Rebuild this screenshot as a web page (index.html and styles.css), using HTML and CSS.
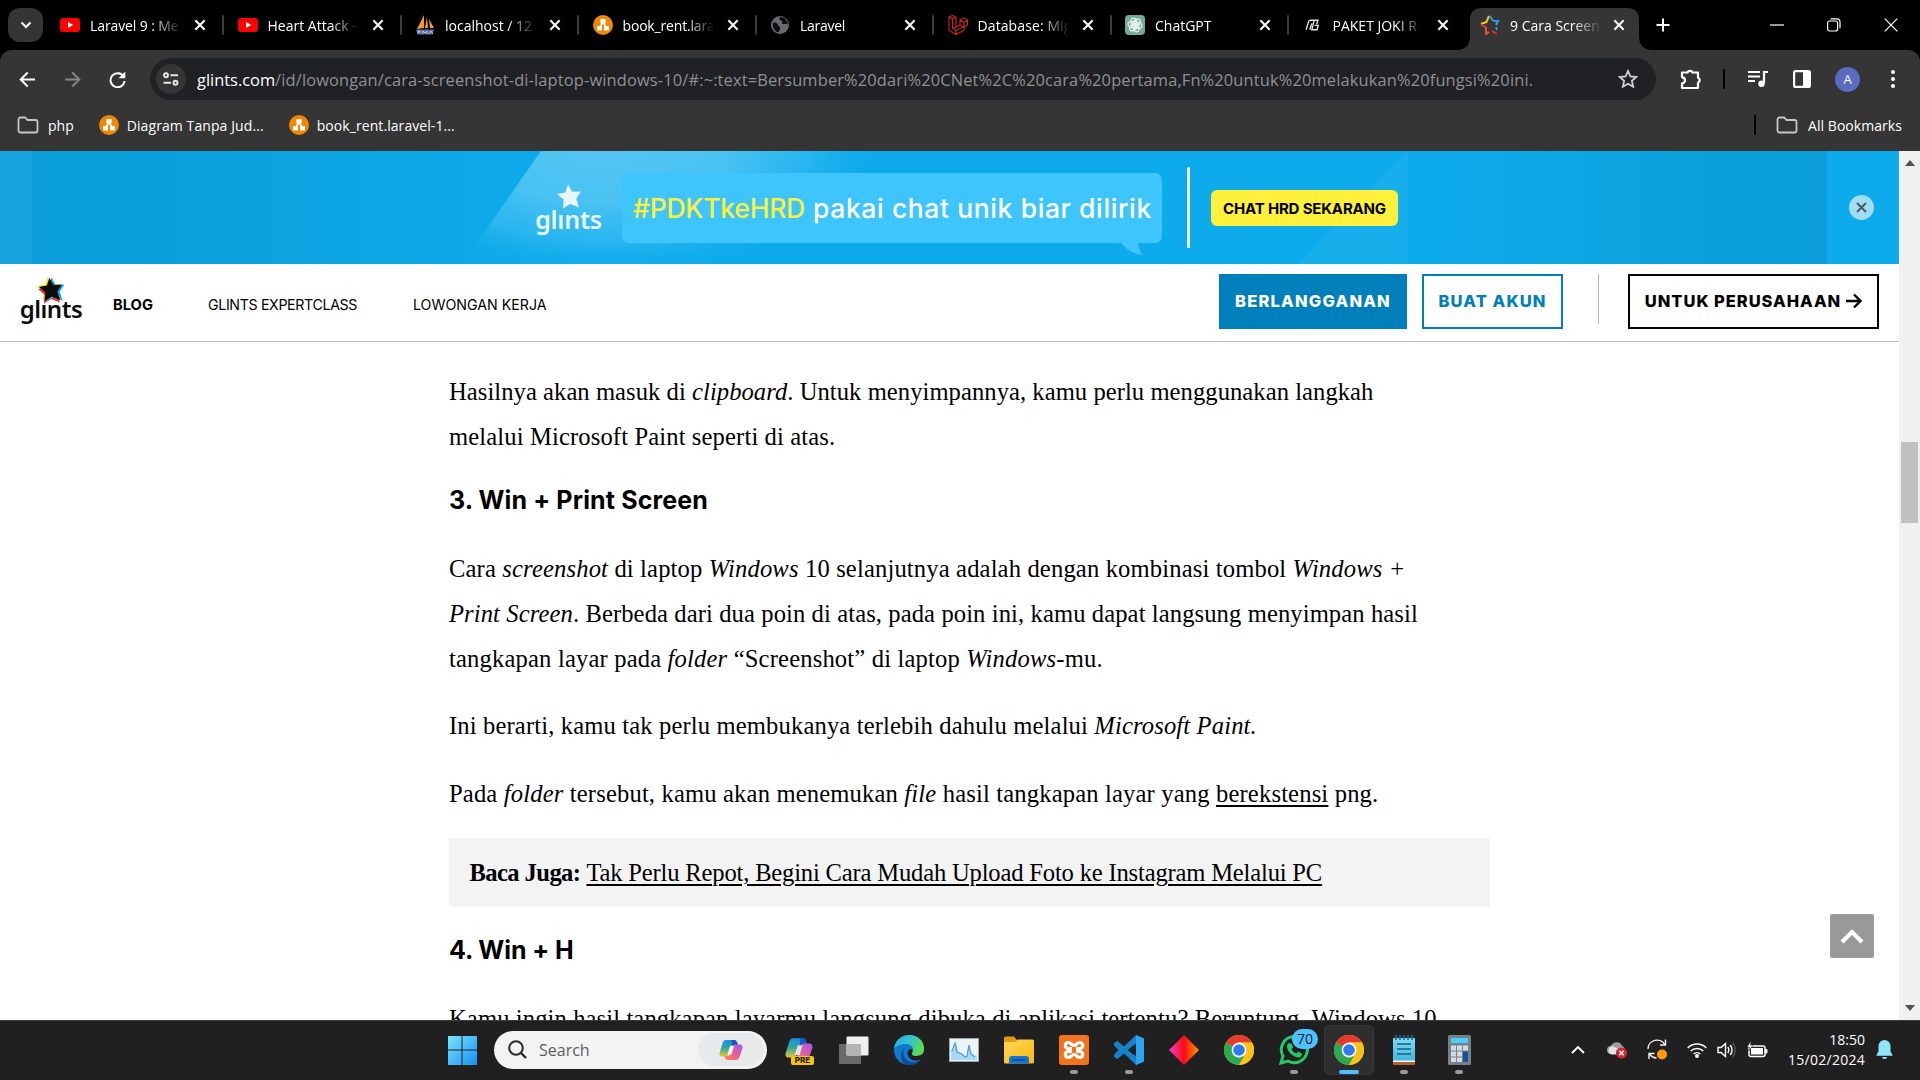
FILE: index.html
```html
<!DOCTYPE html>
<html lang="id">
<head>
<meta charset="utf-8">
<title>9 Cara Screenshot di Laptop Windows 10</title>
<link rel="stylesheet" href="styles.css">
</head>
<body>
<svg class="defs" width="0" height="0" aria-hidden="true">
  <defs>
    <linearGradient id="winblue" x1="0" y1="0" x2="1" y2="1"><stop offset="0" stop-color="#7be3fb"/><stop offset="1" stop-color="#1591f5"/></linearGradient>
    <linearGradient id="cpA" x1="0" y1="0" x2="0" y2="1"><stop offset="0" stop-color="#1a8fe8"/><stop offset=".45" stop-color="#2aa7a5"/><stop offset="1" stop-color="#e8c92c"/></linearGradient>
    <linearGradient id="cpB" x1="1" y1="0" x2="0" y2="1"><stop offset="0" stop-color="#9a5cf0"/><stop offset=".5" stop-color="#ea5c9c"/><stop offset="1" stop-color="#fb8a3c"/></linearGradient>
    <linearGradient id="edgeG" x1="0" y1="0" x2="1" y2=".4"><stop offset="0" stop-color="#2fa8e6"/><stop offset=".6" stop-color="#34c6c8"/><stop offset="1" stop-color="#5fdc4c"/></linearGradient>
    <linearGradient id="folderG" x1="0" y1="0" x2="1" y2="1"><stop offset="0" stop-color="#ffd65c"/><stop offset="1" stop-color="#f9b90c"/></linearGradient>
    <linearGradient id="diaG"><stop offset="0" stop-color="#f43fd0"/><stop offset=".5" stop-color="#fb0a12"/><stop offset="1" stop-color="#ff9a00"/></linearGradient>
    <linearGradient id="noteG" x1="0" y1="0" x2="0" y2="1"><stop offset="0" stop-color="#7fdcf2"/><stop offset="1" stop-color="#3fb4dc"/></linearGradient>
    <symbol id="x" viewBox="0 0 12 12"><path d="M2 2l8 8M10 2l-8 8" stroke="#f2f2f2" stroke-width="1.9" fill="none"/></symbol>
    <symbol id="yt" viewBox="0 0 20 14"><rect width="20" height="14" rx="3.2" fill="#f00"/><path d="M8 4l5.2 3L8 10z" fill="#fff"/></symbol>
    <symbol id="drawio" viewBox="0 0 20 20"><circle cx="10" cy="10" r="10" fill="#f08705"/><path d="M10 7L6.5 13M10 7l3.500 6" stroke="#fff" stroke-width="1.600"/><rect x="7.400" y="4" width="5.200" height="4.600" rx=".8" fill="#fff"/><rect x="4" y="11" width="5" height="4.600" rx=".8" fill="#fff"/><rect x="11" y="11" width="5" height="4.600" rx=".8" fill="#fff"/></symbol>
    <symbol id="folder" viewBox="0 0 22 18"><path d="M1.500 3.500a2 2 0 0 1 2-2h4.700l2.300 2.500h8a2 2 0 0 1 2 2v8.500a2 2 0 0 1-2 2h-15a2 2 0 0 1-2-2z" fill="none" stroke="#c7c7c7" stroke-width="1.800"/></symbol>
    <symbol id="chrome" viewBox="0 0 30 30"><circle cx="15" cy="15" r="15" fill="#fbc116"/><path d="M15 15L2 7.500A15 15 0 0 1 28 7.500H15z" fill="#e33b2e"/><path d="M2 7.500A15 15 0 0 0 15 30l6.500-11.300L15 15z" fill="#2da94f"/><path d="M15 15l6.500 3.700L15 30a15 15 0 0 0 13-22.500H15z" fill="#fbc116"/><circle cx="15" cy="15" r="7.400" fill="#fff"/><circle cx="15" cy="15" r="5.800" fill="#2f7bee"/></symbol>
    <symbol id="copilot" viewBox="0 0 24 22"><path d="M7 1h8c2 0 2.500 1 3 2.500L19 6h-4c-2 0-3 1-3.500 3L9.500 15c-.6 2-1.500 2.500-3 2.500H3C1 17.500 0 15.500.6 13.500L3.600 4C4.200 2 5 1 7 1z" fill="url(#cpA)"/><path d="M12.500 1H15c2 0 2.500 1 3 2.500L19 6h-4c-1 0-1.500.2-2 .5z" fill="#1755c8"/><path d="M17 21H9c-2 0-2.500-1-3-2.500L5.400 17H8c2 0 3-1 3.500-3l2-6c.6-2 1.500-2.500 3-2.500H21c2 0 3 2 2.400 4L20.400 18c-.6 2-1.400 3-3.400 3z" fill="url(#cpB)"/><path class="cpgap" d="M11 7h4l-2.500 8.500h-4z"/></symbol>
    <symbol id="star5" viewBox="0 0 24 24"><path d="M11 0l4.200 7.200L24 7l-4.800 7.200L22 23l-8.700-3.600L6 24l.6-9L0 9.400l8.300-1.500z"/></symbol>
  </defs>
</svg>

<header class="browser">
  <div class="tabs">
    <div class="tabsearch"><svg width="12" height="8" viewBox="0 0 12 8"><path d="M1.500 1.500L6 6l4.500-4.500" fill="none" stroke="#fff" stroke-width="2"/></svg></div>
    <div class="tab"><svg class="fav" viewBox="0 0 20 14"><use href="#yt"/></svg><span class="title"><span class="t tt1">Laravel 9 : Me</span></span><svg class="close"><use href="#x"/></svg></div>
    <div class="tab"><svg class="fav" viewBox="0 0 20 14"><use href="#yt"/></svg><span class="title"><span class="t">Heart Attack -</span></span><svg class="close"><use href="#x"/></svg></div>
    <div class="tab"><svg class="fav" viewBox="0 0 20 20"><path d="M9 0v13L2 14zM12 2l1 11h-3zM14 4l5 9h-4z" fill="#f39a2c"/><path d="M1 14.500h18l-1.500 5h-15z" fill="#5c6aa0"/><path d="M3 19v-3h2v2M8 19v-3l2 2 2-2v3M14 19l2-3 2 3" stroke="#d7dbe8" fill="none" stroke-width=".8"/></svg><span class="title"><span class="t">localhost / 12</span></span><svg class="close"><use href="#x"/></svg></div>
    <div class="tab"><svg class="fav" viewBox="0 0 20 20"><use href="#drawio"/></svg><span class="title"><span class="t tt4">book_rent.lara</span></span><svg class="close"><use href="#x"/></svg></div>
    <div class="tab"><svg class="fav" viewBox="0 0 20 20"><circle cx="10" cy="10" r="9" fill="#686c72"/><path d="M3 8c3-1 4 0 5 2s3 2 2 4-1 4-3 3-5-5-4-9zM10 2c-2 3 1 3 2 4s-1 3 1 3 4-1 5 1c0-4-3-8-8-8z" fill="#0b0b0b"/></svg><span class="title"><span class="t tt5">Laravel</span></span><svg class="close"><use href="#x"/></svg></div>
    <div class="tab"><svg class="fav" viewBox="0 0 20 20"><path d="M1 2l3.500-1.500L8 2v10l4-2V5l4-2 3.500 2v5L16 12v3.500L8 19.500 1 15.500zM1 2l3.500 2L8 2M4.500 4v9.500L8 15.500l8-4V7.500L12 5M16 7.500L19.500 5M8 15.500v4M12 10l4 2M8 12l-3.500 1.500" fill="none" stroke="#c8281e" stroke-width="1.100"/></svg><span class="title"><span class="t tt6">Database: Mig</span></span><svg class="close"><use href="#x"/></svg></div>
    <div class="tab"><svg class="fav" viewBox="0 0 20 20"><rect width="20" height="20" rx="4" fill="#74aa9c"/><g fill="none" stroke="#e8f3f0" stroke-width="1.200"><rect x="6" y="3.200" width="5" height="9" rx="2.500"/><rect x="6" y="3.200" width="5" height="9" rx="2.500" transform="rotate(60 10 10)"/><rect x="6" y="3.200" width="5" height="9" rx="2.500" transform="rotate(120 10 10)"/><rect x="6" y="3.200" width="5" height="9" rx="2.500" transform="rotate(180 10 10)"/><rect x="6" y="3.200" width="5" height="9" rx="2.500" transform="rotate(240 10 10)"/><rect x="6" y="3.200" width="5" height="9" rx="2.500" transform="rotate(300 10 10)"/></g></svg><span class="title"><span class="t">ChatGPT</span></span><svg class="close"><use href="#x"/></svg></div>
    <div class="tab last"><svg class="fav joki" viewBox="0 0 20 20"><path d="M1.500 16L4.500 5.500Q5 4 7 4h9l-1.500 5M6 16l2.500-8M17 4h-5.500L8.500 16h6.500l1.500-5.500h-4.500" fill="none" stroke="#e4e4e4" stroke-width="1.700"/></svg><span class="title"><span class="t">PAKET JOKI R</span></span><svg class="close"><use href="#x"/></svg></div>
    <div class="tab active"><svg class="fav" viewBox="0 0 20 20"><g fill="none" stroke-width="2"><path d="M9 1L6.500 7 1 9" stroke="#f6c915"/><path d="M10 1l3 5" stroke="#2b9fe0"/><path d="M13.500 6H18l-2 4" stroke="#1ba6e0"/><path d="M1 9.500l5 3" stroke="#e33434"/><path d="M6 12v7l3-2" stroke="#e8542c"/><path d="M16 12l1 3" stroke="#2b9fe0"/><path d="M12 16l5 3" stroke="#e32a3c"/></g></svg><span class="title"><span class="t">9 Cara Screen</span></span><svg class="close"><use href="#x"/></svg></div>
    <svg class="plus" width="14" height="14" viewBox="0 0 14 14"><path d="M7 .5v13M.5 7h13" stroke="#fff" stroke-width="2"/></svg>
    <div class="winbtns">
      <svg width="14" height="14" viewBox="0 0 14 14"><path d="M0 7h14" stroke="#fff" stroke-width="1.200"/></svg>
      <svg width="14" height="14" viewBox="0 0 14 14"><rect x=".6" y="3" width="10" height="10" rx="2" fill="none" stroke="#fff" stroke-width="1.200"/><path d="M3.500 .8H10a3 3 0 0 1 3 3v6.500" fill="none" stroke="#fff" stroke-width="1.200"/></svg>
      <svg width="14" height="14" viewBox="0 0 14 14"><path d="M.7.7l12.600 12.600M13.300.7L.7 13.300" stroke="#fff" stroke-width="1.200"/></svg>
    </div>
  </div>

  <div class="toolbar">
    <svg width="17" height="17" viewBox="0 0 17 17"><path d="M16 8.500H2M8.700 1.500L1.700 8.500l7 7" fill="none" stroke="#fff" stroke-width="2"/></svg>
    <svg width="17" height="17" viewBox="0 0 17 17"><path d="M1 8.500h14M8.300 1.500l7 7-7 7" fill="none" stroke="#858585" stroke-width="2"/></svg>
    <svg width="17" height="17" viewBox="0 0 17 17"><path d="M14.500 5.500A7 7 0 1 0 15.500 10" fill="none" stroke="#fff" stroke-width="2"/><path d="M16.300.5v6.700H9.600z" fill="#fff"/></svg>
    <div class="omnibox">
      <div class="siteinfo"><svg width="16" height="14" viewBox="0 0 16 14"><g fill="none" stroke="#e8e8e8" stroke-width="1.900"><circle cx="3" cy="3.200" r="2"/><path d="M7.500 3.200H15M.5 10.800H8"/><circle cx="12.500" cy="10.800" r="2"/></g></svg></div>
      <span class="url"><span class="t host">glints.com</span><span class="t path">/id/lowongan/cara-screenshot-di-laptop-windows-10/#:~:text=Bersumber%20dari%20CNet%2C%20cara%20pertama,Fn%20untuk%20melakukan%20fungsi%20ini.</span></span>
      <svg width="20" height="20" viewBox="0 0 20 20"><path d="M10 2l2.400 5.400 5.900.6-4.400 3.900 1.300 5.800L10 14.700l-5.200 3 1.300-5.800L1.700 8l5.900-.6z" fill="none" stroke="#d0d0d0" stroke-width="1.800"/></svg>
    </div>
    <svg class="puzzle" width="22" height="22" viewBox="0 0 22 22"><path d="M2 4.500h5.500a2.700 2.700 0 0 1 5 0H18v5.200a2.700 2.700 0 0 1 0 5V20H2v-4.700a3 3 0 0 0 0-6z" fill="none" stroke="#fff" stroke-width="2.200" stroke-linejoin="round"/></svg>
    <i class="vsep"></i>
    <svg class="media" width="20" height="18" viewBox="0 0 20 18"><path d="M0 2h12M0 6.500h12M0 11h7M20 2h-4v11" fill="none" stroke="#fff" stroke-width="2.200"/><circle cx="13.500" cy="13.800" r="3.200" fill="#fff"/></svg>
    <svg class="panel" width="18" height="18" viewBox="0 0 18 18"><rect x="1.100" y="1.100" width="15.800" height="15.800" rx="1.500" fill="none" stroke="#fff" stroke-width="2.200"/><path d="M10 1h7v16h-7z" fill="#fff"/></svg>
    <span class="avatar">A</span>
    <svg class="dots" width="4" height="20" viewBox="0 0 4 20"><circle cx="2" cy="3" r="2" fill="#fff"/><circle cx="2" cy="10" r="2" fill="#fff"/><circle cx="2" cy="17" r="2" fill="#fff"/></svg>
  </div>

  <div class="bookmarks">
    <svg width="22" height="18"><use href="#folder"/></svg><span class="t bm1">php</span>
    <svg class="bmi" width="20" height="20"><use href="#drawio"/></svg><span class="t bm2">Diagram Tanpa Jud...</span>
    <svg class="bmi" width="20" height="20"><use href="#drawio"/></svg><span class="t bm3">book_rent.laravel-1...</span>
    <div class="allbm"><i class="vsep"></i><svg width="22" height="18"><use href="#folder"/></svg><span class="t">All Bookmarks</span></div>
  </div>
</header>

<main class="viewport">
  <div class="page">
    <div class="banner">
      <svg class="bannerart" width="1795" height="113" viewBox="0 0 1795 113">
        <defs>
          <linearGradient id="bg1"><stop offset="0" stop-color="#0a9dd9"/><stop offset=".12" stop-color="#0ba2df"/><stop offset=".3" stop-color="#0eabec"/><stop offset=".78" stop-color="#0eabec"/><stop offset=".95" stop-color="#0a9fda"/><stop offset="1" stop-color="#0a9dd9"/></linearGradient>
          <radialGradient id="bg2" gradientUnits="userSpaceOnUse" cx="0" cy="0" r="1" gradientTransform="translate(575 -5) scale(270 128)"><stop offset="0" stop-color="#55c7f4"/><stop offset=".45" stop-color="#48c2f2"/><stop offset=".75" stop-color="#2fb8f0" stop-opacity=".8"/><stop offset="1" stop-color="#0eabec" stop-opacity="0"/></radialGradient>
        </defs>
        <rect width="1795" height="113" fill="url(#bg1)"/>
        <path d="M509 0h500v113H430z" fill="url(#bg2)"/>
        <path d="M1376 0v113h-110z" fill="#22b3ee" opacity=".45"/>
      </svg>
      <div class="bannerrow">
        <div class="logo light"><svg width="24" height="25" fill="#e8f7fe"><use href="#star5"/></svg><span class="t">glınts</span></div>
        <div class="bubble"><span class="t hash">#PDKTkeHRD</span><span class="t says">pakai chat unik biar dilirik</span>
          <svg class="tail" width="24" height="12" viewBox="0 0 24 12"><path d="M0 0h17q1 8 4 12Q8 10 0 0z" fill="#3fc5fd"/></svg></div>
        <i class="rule"></i>
        <a class="chat"><span class="t">CHAT HRD SEKARANG</span></a>
        <span class="dismiss"><svg width="11" height="11" viewBox="0 0 11 11"><path d="M1 1l9 9M10 1l-9 9" stroke="#4b5a62" stroke-width="2"/></svg></span>
      </div>
    </div>

    <nav class="nav">
      <div class="logo dark"><svg width="28" height="29" viewBox="0 0 28 29"><use href="#star5" x="0" y="1" width="24" height="25" fill="#f7e017"/><use href="#star5" x="1" y="4" width="24" height="25" fill="#ee2d33"/><use href="#star5" x="3.500" y="2" width="24" height="25" fill="#1ba6e0"/><use href="#star5" x="2" y="2.500" width="23" height="24" fill="#0c0c0c"/></svg><span class="t">glınts</span></div>
      <a class="n1">BLOG</a>
      <a class="n2">GLINTS EXPERTCLASS</a>
      <a class="n3">LOWONGAN KERJA</a>
      <div class="actions">
        <a class="btn solid">BERLANGGANAN</a>
        <a class="btn outline">BUAT AKUN</a>
        <i class="divider"></i>
        <a class="btn company">UNTUK PERUSAHAAN<svg width="16" height="16" viewBox="0 0 16 16"><path d="M0 8h14M8 1.500L14.500 8 8 14.500" fill="none" stroke="#000" stroke-width="2.400"/></svg></a>
      </div>
    </nav>

    <article class="article">
      <p><span class="t l1">Hasilnya akan masuk di <em>clipboard</em>. Untuk menyimpannya, kamu perlu menggunakan langkah</span>
      <span class="t l2">melalui Microsoft Paint seperti di atas.</span></p>
      <h3 class="h1">3. Win + Print Screen</h3>
      <p><span class="t l3">Cara <em>screenshot</em> di laptop <em>Windows</em> 10 selanjutnya adalah dengan kombinasi tombol <em>Windows +</em></span>
      <span class="t l4"><em>Print Screen</em>. Berbeda dari dua poin di atas, pada poin ini, kamu dapat langsung menyimpan hasil</span>
      <span class="t l5">tangkapan layar pada <em>folder</em> “Screenshot” di laptop <em>Windows</em>-mu.</span></p>
      <p><span class="t l6">Ini berarti, kamu tak perlu membukanya terlebih dahulu melalui <em>Microsoft Paint.</em></span></p>
      <p><span class="t l7">Pada <em>folder</em> tersebut, kamu akan menemukan <em>file</em> hasil tangkapan layar yang <a>berekstensi</a> png.</span></p>
      <div class="also"><strong class="t">Baca Juga:</strong><a class="t">Tak Perlu Repot, Begini Cara Mudah Upload Foto ke Instagram Melalui PC</a></div>
      <h3 class="h2">4. Win + H</h3>
      <p><span class="t l8">Kamu ingin hasil tangkapan layarmu langsung dibuka di aplikasi tertentu? Beruntung, Windows 10</span></p>
    </article>
  </div>
  <div class="scrollbar">
    <svg width="10" height="6" viewBox="0 0 10 6"><path d="M0 6l5-6 5 6z" fill="#505050"/></svg>
    <i class="thumb"></i>
    <svg width="10" height="6" viewBox="0 0 10 6"><path d="M0 0l5 6 5-6z" fill="#505050"/></svg>
  </div>
  <div class="totop"><svg width="24" height="15" viewBox="0 0 24 15"><path d="M2 13L12 3l10 10" fill="none" stroke="#fff" stroke-width="4"/></svg></div>
</main>

<footer class="taskbar">
  <svg class="start" width="30" height="30" viewBox="0 0 30 30"><path d="M1 1h13.500v13.500H1zM15.500 1H30v13.500H15.500zM1 15.500h13.500V30H1zM15.500 15.500H30V30H15.500z" fill="url(#winblue)"/></svg>
  <div class="search">
    <svg width="19" height="19" viewBox="0 0 19 19"><circle cx="8" cy="8" r="6.800" fill="none" stroke="#2b2b2b" stroke-width="2"/><path d="M13 13l5 5" stroke="#2b2b2b" stroke-width="2.400"/></svg>
    <span class="t se">Search</span>
    <div class="pill"><svg width="24" height="22"><use href="#copilot"/></svg></div>
  </div>
  <div class="app dark"><svg width="28" height="26" viewBox="0 0 24 22"><use href="#copilot"/></svg><b class="pre">PRE</b></div>
  <div class="app"><svg width="30" height="28" viewBox="0 0 30 28"><rect y="8" width="22" height="20" rx="1" fill="#6a6a6a"/><rect x="7.500" y=".5" width="22" height="19" rx="1" fill="#efefef"/><path d="M7.500 8H22v11.500H7.500z" fill="#b5b5b5"/></svg></div>
  <div class="app"><svg width="30" height="30" viewBox="0 0 30 30"><circle cx="15" cy="15" r="15" fill="#1279d0"/><path d="M0 14C1 5 8 0 15 0c9 0 15 6 15 13 0 6-4 8-8 8-3 0-5-1-4-3 3-4 0-9-6-9C7 9 2 11 0 14z" fill="url(#edgeG)"/><path d="M11 13c-3 3-2 9 2 12s10 3 14-1c-3 5-8 6-12 6-5 0-8-4-8-9 0-4 2-7 4-8z" fill="#114a8d"/><path d="M18 18c-1 2 1 3 4 3 3 0 6-1 8-3v3l-2.500 3c-2 1-4 1.500-6 1.500-4 0-8-3.500-8-7.500 0-2 1.500-4 3-4 2 0 3 2 1.500 4z" fill="#202020"/></svg></div>
  <div class="app"><svg width="30" height="24" viewBox="0 0 30 24"><rect x=".5" y=".5" width="29" height="23" fill="#eef3f6" stroke="#9aa4aa"/><path d="M2 22V12l3-1 2-6 2 9 4 2 3 3 2-1 2-11 2 9 3 2 3-1v5z" fill="#a4d9f7"/><path d="M3 13l3-8 2 9 5 2 3 3 2-1 2-11 2 9 4 3" fill="none" stroke="#3f9fdc" stroke-width="1.200"/></svg></div>
  <div class="app"><svg width="30" height="28" viewBox="0 0 30 28"><path d="M0 2a1.500 1.500 0 0 1 1.500-1.500H10l3 3.500v6H0z" fill="#dd9c12"/><path d="M0 6h11l3-2.500h14.500A1.500 1.500 0 0 1 30 5v21a1.500 1.500 0 0 1-1.500 1.500h-27A1.500 1.500 0 0 1 0 26z" fill="url(#folderG)"/><path d="M5 27.500V23q0-3 3-3h14q3 0 3 3v4.500z" fill="#1377d0"/><path d="M8.500 24h13" stroke="#0a4b92" stroke-width="1.500"/></svg></div>
  <div class="app run"><svg width="30" height="30" viewBox="0 0 30 30"><rect width="30" height="30" rx="3" fill="#f4731f"/><path d="M9.500 7.500c-4 0-4.500 6 0 6h11c4.500 0 4-6 0-6-2.500 0-3 3-5.500 3s-3-3-5.500-3zM9.500 22.500c-4 0-4.500-6 0-6h11c4.500 0 4 6 0 6-2.500 0-3-3-5.500-3s-3 3-5.500 3z" fill="none" stroke="#fff" stroke-width="3.200"/><path d="M13 12h4v6h-4z" fill="#f4731f"/></svg></div>
  <div class="app run"><svg width="30" height="30" viewBox="0 0 30 30"><path d="M22 0l8 3.500v23L22 30 10 18.500 3.500 24 0 22V19.500L4.500 15 0 10.500V8l3.500-2L10 11.500zM22 8.500L13.500 15 22 21.500z" fill="#1782cc"/><path d="M22 0l8 3.500v23L22 30z" fill="#2ba5f2"/></svg></div>
  <div class="app"><svg width="30" height="30" viewBox="0 0 30 30"><path d="M15 0l15 15-15 15L0 15z" fill="url(#diaG)"/></svg></div>
  <div class="app"><svg width="30" height="30"><use href="#chrome"/></svg></div>
  <div class="app run"><svg width="30" height="30" viewBox="0 0 30 30"><path d="M2 28l2-7A13 13 0 1 1 9 26z" fill="none" stroke="#27c768" stroke-width="3"/><path d="M10 8l3 1 1 3.500-1.500 1.500c1 2 2.500 3.500 5 4.500l1.500-2 4 2c0 3-2 4-4 4-5-.5-11-6-11-11 0-2 1-3 2-3.500z" fill="#27c768"/></svg><span class="count">70</span></div>
  <div class="app cur"><svg width="30" height="30"><use href="#chrome"/></svg></div>
  <div class="app run"><svg width="22" height="30" viewBox="0 0 22 30"><rect y="3" width="22" height="24" fill="url(#noteG)"/><path d="M0 26h22v3a1 1 0 0 1-1 1H1a1 1 0 0 1-1-1z" fill="#b5622a"/><path d="M0 25.500h22v1.500H0z" fill="#f5f5f5"/><path d="M3 0v5M7 0v5M11 0v5M15 0v5M19 0v5" stroke="#1c6d94" stroke-width="1.800"/><path d="M4 9h14M4 14h14M4 19h14" stroke="#165f84" stroke-width="1.600"/></svg></div>
  <div class="app run"><svg width="23" height="30" viewBox="0 0 23 30"><rect width="23" height="30" rx="1.500" fill="#76818b"/><rect x="3" y="3" width="17" height="5" fill="#49d0f2"/><path d="M3 10.500h5v5H3zM9 10.500h5v5H9zM15 10.500h5v5h-5zM3 16.500h5v5H3zM9 16.500h5v5H9zM3 22.500h5v4.500H3zM9 22.500h5v4.500H9z" fill="#d3dae0"/><path d="M15 16.500h5V27h-5z" fill="#17509a"/></svg></div>
  <div class="tray">
    <svg width="14" height="9" viewBox="0 0 14 9"><path d="M1 8l6-6 6 6" fill="none" stroke="#fff" stroke-width="1.900"/></svg>
    <svg class="cloud" width="21" height="18" viewBox="0 0 21 18"><path d="M4 13a4 4 0 0 1 0-8C6 0 14 0 15 5c3 0 4 8 0 8z" fill="#9d9d9d"/><path d="M4.500 13.500a4.200 4.200 0 0 1 1-8.200l5 2v6.200z" fill="#e4e4e4"/><circle cx="14.500" cy="12" r="5.600" fill="#d92532"/><path d="M12.300 9.800l4.400 4.400M16.700 9.800l-4.400 4.400" stroke="#fff" stroke-width="1.500"/></svg>
    <svg class="sync" width="21" height="21" viewBox="0 0 21 21"><path d="M1 10a9 9 0 0 1 17-4M18.500.5V6H13M2 20v-5.500h5.500M2.500 15a9 9 0 0 0 7 4" fill="none" stroke="#f2f2f2" stroke-width="1.400"/><circle cx="15" cy="15.500" r="5" fill="#ff9a0c"/></svg>
    <svg class="wifi" width="20" height="16" viewBox="0 0 20 16"><g fill="none" stroke="#fff" stroke-width="1.500"><path d="M.7 6a13 13 0 0 1 18.600 0M3.700 9a9 9 0 0 1 12.600 0M6.700 12a4.800 4.800 0 0 1 6.600 0"/></g><circle cx="10" cy="14" r="2" fill="#fff"/></svg>
    <svg class="vol" width="20" height="16" viewBox="0 0 20 16"><g fill="none" stroke="#fff" stroke-width="1.400"><path d="M1 5.500h3L8.500 1.500v13L4 10.500H1zM10.800 5q2 3 0 6M13.300 3q3.500 5 0 10"/><path d="M16 1.200q4.500 6.800 0 13.600" stroke="#555"/></g></svg>
    <svg class="bat" width="21" height="17" viewBox="0 0 21 17"><rect x="2" y="5" width="16" height="10.500" rx="2" fill="none" stroke="#fff" stroke-width="1.500"/><rect x="4" y="7" width="12" height="6.500" fill="#fff"/><path d="M18.500 8.500H20v3.500h-1.500z" fill="#fff" stroke="#fff"/><path d="M4 0L0 6h2.500L1.500 10 6 4H3.500z" fill="#fff" stroke="#202020" stroke-width=".5"/></svg>
    <div class="clock"><span class="t">18:50</span><span class="t date">15/02/2024</span></div>
    <svg class="bell" width="17" height="19" viewBox="0 0 17 19"><path d="M8.500 0a6 6 0 0 1 6 6v5.500L16.500 15v.7H.5V15l2-3.500V6a6 6 0 0 1 6-6zM6 17h5a2.500 2 0 0 1-5 0z" fill="#8ce6fd"/></svg>
  </div>
</footer>
</body>
</html>
```
FILE: styles.css
```css
* { box-sizing: border-box; }
html, body { margin: 0; height: 100%; overflow: hidden; }
body { width: 1920px; height: 1080px; display: flex; flex-direction: column; background: #fff; font-family: "Open Sans", "Noto Sans", sans-serif; }
svg { display: block; flex: none; }
.defs { position: absolute; }
.t { display: inline-block; white-space: nowrap; flex: none; }
.cpgap { fill: #fff; opacity: .85; }

/* Browser chrome */
.browser { flex: none; height: 151px; background: #000; color: #fff; font-size: 14px; }
.tabs { display: flex; align-items: center; height: 50px; padding-left: 8px; }
.tabsearch { width: 35px; height: 34px; border-radius: 12px; background: #353535; display: flex; align-items: center; justify-content: center; margin-right: 3.5px; }
.tab { position: relative; display: flex; align-items: center; width: 177.5px; height: 50px; padding-left: 13.5px; flex: none; }
.tab::after { content: ""; width: 2px; height: 20px; background: #3b3b3b; border-radius: 1px; margin-left: auto; }
.tab.last::after, .tab.active::after { display: none; }
.fav { width: 20px; height: 20px; margin-right: 10px; }
.fav.joki { width: 16px; margin: 0 12px 0 2px; }
.title { width: 90px; overflow: hidden; flex: none; line-height: 22px; padding-top: 1px; -webkit-mask-image: linear-gradient(90deg, #000 62px, transparent 92px); mask-image: linear-gradient(90deg, #000 62px, transparent 92px); }
.tt1 { letter-spacing: -.1px; }
.tt4 { letter-spacing: -.18px; }
.tt5 { letter-spacing: -.28px; }
.tt6 { letter-spacing: .1px; }
.close { width: 14px; height: 14px; margin-left: 13px; }
.tab.active { width: 173px; isolation: isolate; }
.tab.active::before { content: ""; position: absolute; z-index: -1; left: -10.5px; top: 8px; width: 197px; height: 42px; background: radial-gradient(circle at 0 28px, transparent 13.5px, #353535 14px) 0 0 / 14px 42px no-repeat, radial-gradient(circle at 14px 28px, transparent 13.5px, #353535 14px) 183px 0 / 14px 42px no-repeat, #353535; clip-path: path("M0 42Q14 42 14 28V12Q14 0 26 0H171Q183 0 183 12V28Q183 42 197 42z"); background: #353535; }
.tab.active .close { margin-left: 12px; }
.plus { margin-left: 16.5px; }
.winbtns { display: flex; gap: 43px; margin-left: auto; padding-right: 22px; }
.toolbar { display: flex; align-items: center; height: 58px; background: #353535; border-radius: 12px 12px 0 0; padding-left: 19px; }
.toolbar > svg + svg { margin-left: 28px; }
.omnibox { display: flex; align-items: center; width: 1506px; height: 42px; margin-left: 24px; border-radius: 21px; background: #202124; padding-left: 6px; }
.siteinfo { width: 30px; height: 30px; border-radius: 15px; background: #353535; display: flex; align-items: center; justify-content: center; }
.url { display: flex; margin-left: 11px; width: 1420.5px; font-size: 16.4px; color: #8f9194; }
.host { color: #fff; }
.path { letter-spacing: .155px; }
.toolbar > .puzzle { margin-left: 24px; }
.vsep { width: 2px; height: 20px; background: #000; flex: none; }
.toolbar .vsep { margin-left: 21px; }
.toolbar > .media { margin-left: 23px; }
.toolbar > svg.panel { margin-left: 25px; }
.avatar { width: 25px; height: 25px; margin-left: 24px; border-radius: 50%; background: #5c6bc0; font-size: 13px; line-height: 25px; text-align: center; }
.dots { margin-left: 31px; }
.bookmarks { display: flex; align-items: center; height: 43px; padding: 0 18px 9px 17px; background: #353535; }
.bm1 { margin-left: 9px; }
.bmi { margin: 0 8px 0 25px; }
.bm2 { letter-spacing: .09px; }
.bm3 { letter-spacing: .07px; }
.allbm { display: flex; align-items: center; margin-left: auto; }
.allbm .vsep { margin-right: 20px; }
.allbm .t { margin-left: 10px; letter-spacing: .05px; }

/* Page */
.viewport { position: relative; display: flex; flex: none; height: 869px; overflow: hidden; }
.page { width: 1899px; height: 869px; overflow: hidden; font-family: Inter, sans-serif; }
.banner { position: relative; height: 113px; background: linear-gradient(90deg, #17a2dc 50%, #0dabec 50%); }
.bannerart { position: absolute; left: 32px; top: 0; }
.bannerrow { position: relative; display: flex; align-items: center; height: 113px; padding-left: 535px; }
.logo { display: flex; flex-direction: column; align-items: center; font-family: "Noto Sans", sans-serif; font-weight: 600; }
.logo.light { width: 67px; color: #e8f7fe; font-size: 25px; letter-spacing: -.25px; }
.logo.light .t { line-height: 26px; margin-top: -3px; }
.bubble { position: relative; display: flex; align-items: center; width: 540px; height: 70px; margin-left: 20px; padding-left: 11px; border-radius: 7px; background: #3fc5fd; color: #fff; font-size: 26.5px; font-weight: 500; }
.hash { color: #fdf03b; margin-right: 8px; letter-spacing: -.24px; }
.says { letter-spacing: .6px; }
.tail { position: absolute; right: 17px; top: 70px; }
.rule { width: 3px; height: 81px; margin-left: 25px; border-radius: 2px; background: #eefaff; }
.chat { width: 187px; height: 36px; margin-left: 21px; border-radius: 6px; background: #fff03c; color: #000; font-size: 15px; font-weight: 700; letter-spacing: -.17px; display: flex; align-items: center; justify-content: center; padding-top: 1px; }
.dismiss { width: 25px; height: 25px; margin-left: 451px; border-radius: 50%; background: #a0ddf7; display: flex; align-items: center; justify-content: center; }
.nav { display: flex; height: 78px; border-bottom: 1px solid #c0c0c0; color: #000; font-size: 14.2px; padding-left: 20px; background: #fff; }
.logo.dark { width: 62px; font-size: 24px; letter-spacing: -.5px; color: #0c0c0c; padding-top: 11px; }
.logo.dark .t { line-height: 26px; margin-top: -8px; }
.nav > a { padding-top: 32px; line-height: 18px; white-space: nowrap; flex: none; }
.nav .n1 { margin-left: 31px; width: 95px; font-weight: 700; font-size: 14.7px; }
.n2 { width: 205px; letter-spacing: -.35px; }
.actions { display: flex; margin-left: auto; padding: 10px 20px 0 0; }
.btn { display: flex; align-items: center; justify-content: center; height: 55px; padding-bottom: 2px; font-size: 16.5px; font-weight: 800; white-space: nowrap; }
.solid { width: 188px; background: #0080bb; color: #fff; letter-spacing: 1.2px; }
.outline { width: 141px; margin-left: 15px; border: 2px solid #0080bb; color: #0080bb; letter-spacing: 1.1px; }
.divider { width: 1px; height: 50px; margin: 0 29px 0 35px; background: #b8b8b8; }
.company { width: 251px; border: 2px solid #000; gap: 5px; letter-spacing: .95px; }
.article { margin-left: 449px; width: 1041px; padding-top: 26.5px; font-family: "Liberation Serif", serif; font-size: 24.6px; line-height: 45px; color: #000; }
.article p { display: flex; flex-direction: column; align-items: flex-start; margin: 0 0 22.5px; }
.article p a, .also a { text-decoration: underline; text-decoration-thickness: 2px; text-underline-offset: 3px; }
.article h3 { margin: 0.5px 0 25.5px; height: 39px; font: 700 25px/39px Inter, sans-serif; white-space: nowrap; }
.article .h1 { letter-spacing: .13px; }
.article .h2 { letter-spacing: -.08px; }
.l1 { letter-spacing: .055px; }
.l2 { letter-spacing: .13px; }
.l3 { letter-spacing: .148px; }
.l4 { letter-spacing: .1px; }
.l5 { letter-spacing: .167px; }
.l6 { letter-spacing: .14px; }
.l7 { letter-spacing: .157px; }
.l8 { letter-spacing: .11px; }
.also { display: flex; gap: 6px; height: 69px; padding: 12px 20.5px; background: #f3f3f3; margin-bottom: 24px; }
.also strong { letter-spacing: -.59px; }
.also a { letter-spacing: -.18px; }
.scrollbar { width: 21px; background: #f0f0f0; display: flex; flex-direction: column; align-items: center; padding: 9px 0 9px; }
.thumb { width: 17px; height: 81px; margin-top: 276px; margin-bottom: auto; background: #c1c1c1; }
.totop { position: absolute; left: 1830px; top: 763px; width: 44px; height: 44px; border-radius: 2px; background: #999; display: flex; align-items: center; justify-content: center; }

/* Taskbar */
.taskbar { display: flex; align-items: center; flex: none; height: 60px; padding: 0 0 2px 447px; background: #202020; border-top: 1px solid #3c3c3c; }
.search { display: flex; align-items: center; width: 273px; height: 38px; margin: 0 7px 0 17px; padding: 0 3px 0 14px; border-radius: 19px; background: #f3f3f3; color: #5d5d5d; font-size: 16px; }
.se { margin-left: 12px; }
.pill { width: 66px; height: 33px; margin-left: auto; border-radius: 17px; background: #e7e9ea; display: flex; align-items: center; justify-content: center; }
.app { position: relative; display: flex; align-items: center; justify-content: center; width: 50px; height: 50px; margin-right: 5px; border-radius: 5px; flex: none; }
.app.dark .cpgap { fill: #202020; opacity: 1; }
.pre { position: absolute; left: 17px; top: 31px; width: 23px; height: 9px; border-radius: 2px; background: #fdc20e; color: #1b1b1b; font: 800 8px/9px Inter, sans-serif; text-align: center; }
.run::after, .cur::after { content: ""; position: absolute; left: 21px; bottom: 1px; width: 8px; height: 4px; border-radius: 2px; background: #9a9a9a; }
.cur { background: #2e2e2e; border: 1px solid #393939; }
.cur::after { left: 14px; bottom: 0; width: 20px; background: #4cc2ff; }
.count { position: absolute; left: 23px; top: 4px; width: 26px; height: 20px; border-radius: 10px; background: #4cc2ff; color: #10202c; font-size: 14px; line-height: 20px; text-align: center; }
.tray { display: flex; align-items: center; margin-left: auto; padding-right: 27px; color: #fff; }
.cloud { margin-left: 22px; }
.sync { margin-left: 19px; }
.wifi { margin-left: 19px; }
.vol { margin-left: 10px; }
.bat { margin-left: 10px; }
.clock { display: flex; flex-direction: column; align-items: flex-end; margin-left: 20px; font-size: 14px; line-height: 20px; }
.date { letter-spacing: .27px; }
.bell { margin-left: 11px; }
```
